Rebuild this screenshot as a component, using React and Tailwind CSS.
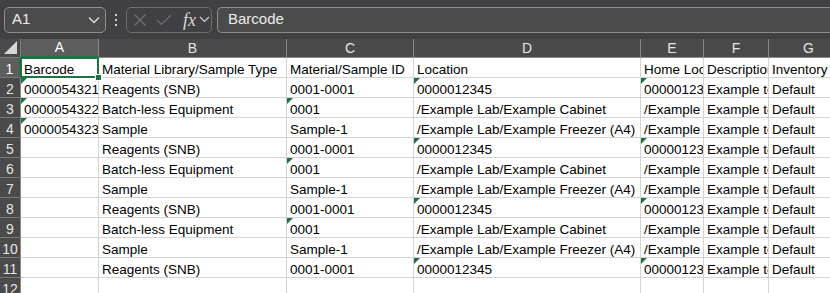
import React from 'react';

// Colonne del foglio: lettera e larghezza (la larghezza è nella classe della griglia)
const columns = ['A', 'B', 'C', 'D', 'E', 'F', 'G'];

// Righe di esempio: testo delle celle + quali celle hanno il triangolino verde
const base = [
  { cells: ['', 'Reagents (SNB)', '0001-0001', '0000012345', '0000012345', 'Example text', 'Default'], flags: [3, 4] },
  { cells: ['', 'Batch-less Equipment', '0001', '/Example Lab/Example Cabinet', '/Example Lab/Example Cabinet', 'Example text', 'Default'], flags: [2] },
  { cells: ['', 'Sample', 'Sample-1', '/Example Lab/Example Freezer (A4)', '/Example Lab/Example Freezer (A4)', 'Example text', 'Default'], flags: [] },
];

const rows = [
  { cells: ['Barcode', 'Material Library/Sample Type', 'Material/Sample ID', 'Location', 'Home Location', 'Description', 'Inventory Type'], flags: [] },
];
for (let i = 0; i < 10; i++) {
  const r = base[i % 3];
  const cells = [...r.cells];
  const flags = [...r.flags];
  if (i < 3) {
    cells[0] = '000005432' + (i + 1);
    flags.push(0);
  }
  rows.push({ cells, flags });
}
rows.push({ cells: ['', '', '', '', '', '', ''], flags: [] });

const font = { fontFamily: '"Liberation Sans", Arial, sans-serif' };

const Toolbar = () => (
  <div className="h-[39px] bg-[#403f42] flex items-center pl-[4px] text-[#ececec]">
    {/* Casella nome */}
    <div className="w-[102px] h-[26px] rounded-[5px] border border-[#8e8e8e] bg-[#4b4b4b] flex items-center justify-between pl-[7px] pr-[5px]">
      <span className="text-[15px]">A1</span>
      <svg width="12" height="8" viewBox="0 0 12 8"><path d="M1 1.5 6 6.5 11 1.5" fill="none" stroke="#e0e0e0" strokeWidth="1.3" /></svg>
    </div>
    {/* Tre puntini */}
    <div className="w-[20px] flex flex-col items-center gap-[3px]">
      <span className="w-[2px] h-[2px] bg-[#cfcfcf]" />
      <span className="w-[2px] h-[2px] bg-[#cfcfcf]" />
      <span className="w-[2px] h-[2px] bg-[#cfcfcf]" />
    </div>
    {/* Pulsanti formula */}
    <div className="w-[86px] h-[26px] rounded-[5px] border border-[#6e6e6e] flex items-center pl-[6px] gap-[9px]">
      <svg width="14" height="14" viewBox="0 0 14 14"><path d="M1.5 1.5 12.5 12.5M12.5 1.5 1.5 12.5" stroke="#707070" strokeWidth="1.2" /></svg>
      <svg width="16" height="12" viewBox="0 0 16 12"><path d="M1 6 5.5 10.5 15 1" fill="none" stroke="#707070" strokeWidth="1.2" /></svg>
      <div className="flex items-center gap-[3px] ml-[2px]">
        <span className="italic text-[18px] text-[#d8d8d8] leading-none" style={{ fontFamily: '"Liberation Serif", serif' }}>fx</span>
        <svg width="11" height="7" viewBox="0 0 11 7"><path d="M1 1 5.5 5.5 10 1" fill="none" stroke="#d0d0d0" strokeWidth="1.2" /></svg>
      </div>
    </div>
    {/* Barra della formula */}
    <div className="ml-[5px] flex-1 h-[26px] rounded-l-[5px] border border-r-0 border-[#8e8e8e] bg-[#4b4b4b] flex items-center pl-[10px]">
      <span className="text-[15px]">Barcode</span>
    </div>
  </div>
);

const Triangle = () => (
  <span className="absolute top-0 left-0 w-0 h-0 border-t-[6px] border-r-[6px] border-t-[#1e7145] border-r-transparent" />
);

export default function App() {
  return (
    <div className="w-[830px] h-[293px] overflow-hidden bg-white" style={font}>
      <Toolbar />
      <div className="grid grid-cols-[21px_78px_188px_127px_227px_63px_65px_80px]">
        {/* Angolo seleziona tutto */}
        <div className="h-[19px] bg-[#4a4a4a] border-r border-b border-[#7a7a7a] relative">
          <svg className="absolute right-[3px] bottom-[3px]" width="13" height="13" viewBox="0 0 13 13"><path d="M13 0 13 13 0 13Z" fill="#d6d6d6" /></svg>
        </div>
        {columns.map((c) => (
          <div
            key={c}
            className={
              c === 'A'
                ? 'h-[19px] bg-[#5d5d5d] border-r border-b-2 border-r-[#8a8a8a] border-b-[#1e7145] flex items-center justify-center text-[14px] text-white'
                : 'h-[19px] bg-[#4a4a4a] border-r border-b border-r-[#8a8a8a] border-b-[#8a8a8a] flex items-center justify-center text-[14px] text-[#e4e4e4]'
            }
          >
            {c}
          </div>
        ))}

        {rows.map((row, ri) => (
          <React.Fragment key={ri}>
            <div
              className={
                ri === 0
                  ? 'h-[20px] bg-[#5d5d5d] border-r-2 border-b border-r-[#1e7145] border-b-[#7a7a7a] flex items-center justify-center pt-[3px] text-[14px] text-white'
                  : 'h-[20px] bg-[#4a4a4a] border-r border-b border-r-[#8a8a8a] border-b-[#7a7a7a] flex items-center justify-center pt-[3px] text-[14px] text-[#e4e4e4]'
              }
            >
              {ri + 1}
            </div>
            {row.cells.map((text, ci) => (
              <div
                key={ci}
                className="relative h-[20px] border-r border-b border-[#d4d4d4]"
              >
                <div className="h-full overflow-hidden whitespace-nowrap pl-[3px] pt-[3px] text-[13.5px] leading-[17px] text-black">
                  {text}
                </div>
                {row.flags.includes(ci) && <Triangle />}
                {ri === 0 && ci === 0 && (
                  <div className="absolute -left-px -top-px -right-px -bottom-px border-2 border-[#1e7145] z-10">
                    <span className="absolute -right-[5px] -bottom-[5px] w-[7px] h-[7px] bg-[#1e7145] border border-white" />
                  </div>
                )}
              </div>
            ))}
          </React.Fragment>
        ))}
      </div>
    </div>
  );
}
